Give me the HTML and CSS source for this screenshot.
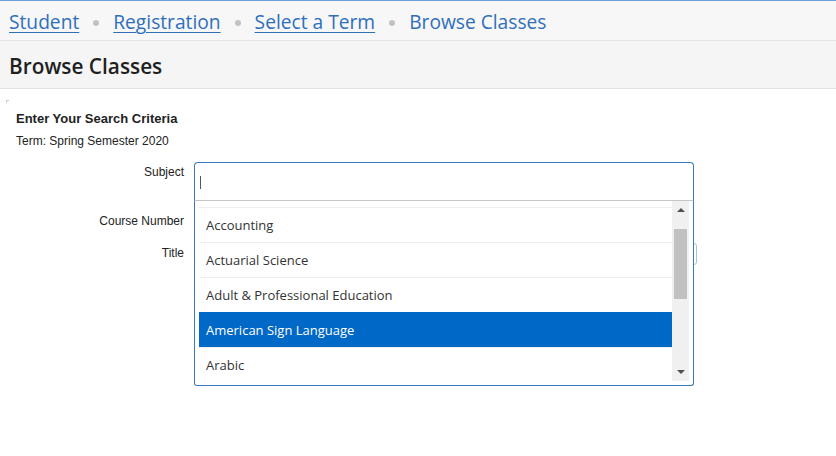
FILE: index.html
```html
<!DOCTYPE html>
<html lang="en">
<head>
    <meta charset="UTF-8">
    <title>Browse Classes</title>
    <link rel="stylesheet" href="styles.css">
</head>
<body>
    <nav class="breadcrumbs">
        <a href="#">Student</a>
        <span class="sep"></span>
        <a href="#">Registration</a>
        <span class="sep"></span>
        <a href="#">Select a Term</a>
        <span class="sep"></span>
        <span class="current">Browse Classes</span>
    </nav>

    <header class="page-header">
        <h1>Browse Classes</h1>
    </header>

    <main class="content">
        <h2>Enter Your Search Criteria</h2>
        <p class="term">Term: Spring Semester 2020</p>

        <div class="criteria">
            <label class="label">Subject</label>
            <div class="field subject">
                <div class="combo-input"><span class="caret"></span></div>
                <div class="dropdown">
                    <ul class="options">
                        <li>Accounting</li>
                        <li>Actuarial Science</li>
                        <li>Adult &amp; Professional Education</li>
                        <li class="selected">American Sign Language</li>
                        <li>Arabic</li>
                    </ul>
                    <div class="scrollbar">
                        <span class="arrow up"></span>
                        <span class="thumb"></span>
                        <span class="arrow down"></span>
                    </div>
                </div>
            </div>

            <label class="label">Course Number</label>
            <div class="field"><div class="text-input"></div></div>

            <label class="label">Title</label>
            <div class="field"><div class="text-input wide"></div></div>
        </div>
    </main>
</body>
</html>
```

FILE: styles.css
```css
:root {
    --link-color: #2f6fba;
    --focus-blue: #3a78c2;
    --select-blue: #0068c6;
    --bar-bg: #f7f7f7;
    --line: #e4e4e4;
}

html, body {
    min-height: 100vh;
}

body {
    margin: 0;
    font-family: "Open Sans", "Liberation Sans", sans-serif;
    color: #333;
    background: #fff;
}

.breadcrumbs {
    height: 37px;
    padding: 2px 9px 0;
    border-top: 1px solid #6ea2db;
    border-bottom: 1px solid var(--line);
    background: var(--bar-bg);
    display: flex;
    align-items: center;
    font-size: 19.2px;
}

.breadcrumbs a {
    color: var(--link-color);
    text-decoration: underline;
    text-underline-offset: 3px;
    text-decoration-thickness: 1px;
}

.breadcrumbs .current {
    color: var(--link-color);
}

.sep {
    width: 6px;
    height: 6px;
    border-radius: 50%;
    background: #c2c2c2;
    margin: 3px 14px 0 14px;
}

.page-header {
    height: 45px;
    padding: 2px 9px 0;
    background: #f5f5f5;
    border-bottom: 1px solid #e2e2e2;
    display: flex;
    align-items: center;
}

.page-header h1 {
    margin: 0;
    font-size: 20.8px;
    font-weight: 600;
    color: #1f1f1f;
}

.content {
    position: relative;
    padding: 22px 16px 0;
    font-family: "Liberation Sans", Arial, sans-serif;
    color: #222;
}

.content::before {
    content: "";
    position: absolute;
    left: 6px;
    top: 11px;
    width: 2px;
    height: 2px;
    border-left: 1px solid #c8c8c8;
    border-top: 1px solid #c8c8c8;
}

.content h2 {
    margin: 0;
    font-size: 13px;
    font-weight: bold;
    line-height: 16px;
}

.term {
    margin: 7px 0 0;
    font-size: 12px;
    line-height: 15px;
}

.criteria {
    display: grid;
    grid-template-columns: 168px 500px;
    column-gap: 10px;
    row-gap: 10px;
    margin-top: 13px;
}

.label {
    text-align: right;
    font-size: 12px;
    line-height: 14px;
    padding-top: 3px;
}

.field {
    position: relative;
}

.combo-input {
    height: 37px;
    border: 1px solid var(--focus-blue);
    border-bottom-color: #c6c6c6;
    border-radius: 4px 4px 0 0;
    display: flex;
    align-items: center;
    padding-left: 5px;
}

.caret {
    width: 1px;
    height: 13px;
    background: #555;
    margin-top: 1px;
}

.text-input {
    height: 20px;
    width: 498px;
    border: 1px solid #a9c0de;
    border-radius: 3px;
}

.text-input.wide {
    width: 501px;
}

.dropdown {
    position: absolute;
    top: 100%;
    left: 0;
    width: 490px;
    height: 180px;
    padding: 0 4px 4px;
    border: 1px solid var(--focus-blue);
    border-top: none;
    border-radius: 0 0 3px 3px;
    background: #fff;
    display: flex;
    z-index: 5;
}

.options {
    list-style: none;
    margin: 0;
    padding: 6px 0 0;
    flex: 1;
    font-family: "Open Sans", sans-serif;
    font-size: 13px;
}

.options li {
    height: 35px;
    box-sizing: border-box;
    border-top: 1px solid #efefef;
    padding-left: 7px;
    display: flex;
    align-items: center;
    color: #333;
}

.options li.selected {
    background: var(--select-blue);
    border-top-color: var(--select-blue);
    color: #fff;
}

.scrollbar {
    width: 17px;
    background: #f0f0f0;
    position: relative;
}

.thumb {
    position: absolute;
    left: 2px;
    right: 2px;
    top: 28px;
    height: 70px;
    background: #c1c1c1;
}

.arrow {
    position: absolute;
    left: 5px;
    width: 0;
    height: 0;
    border-left: 4px solid transparent;
    border-right: 4px solid transparent;
}

.arrow.up {
    top: 7px;
    border-bottom: 4px solid #505050;
}

.arrow.down {
    bottom: 7px;
    border-top: 4px solid #505050;
}
```
